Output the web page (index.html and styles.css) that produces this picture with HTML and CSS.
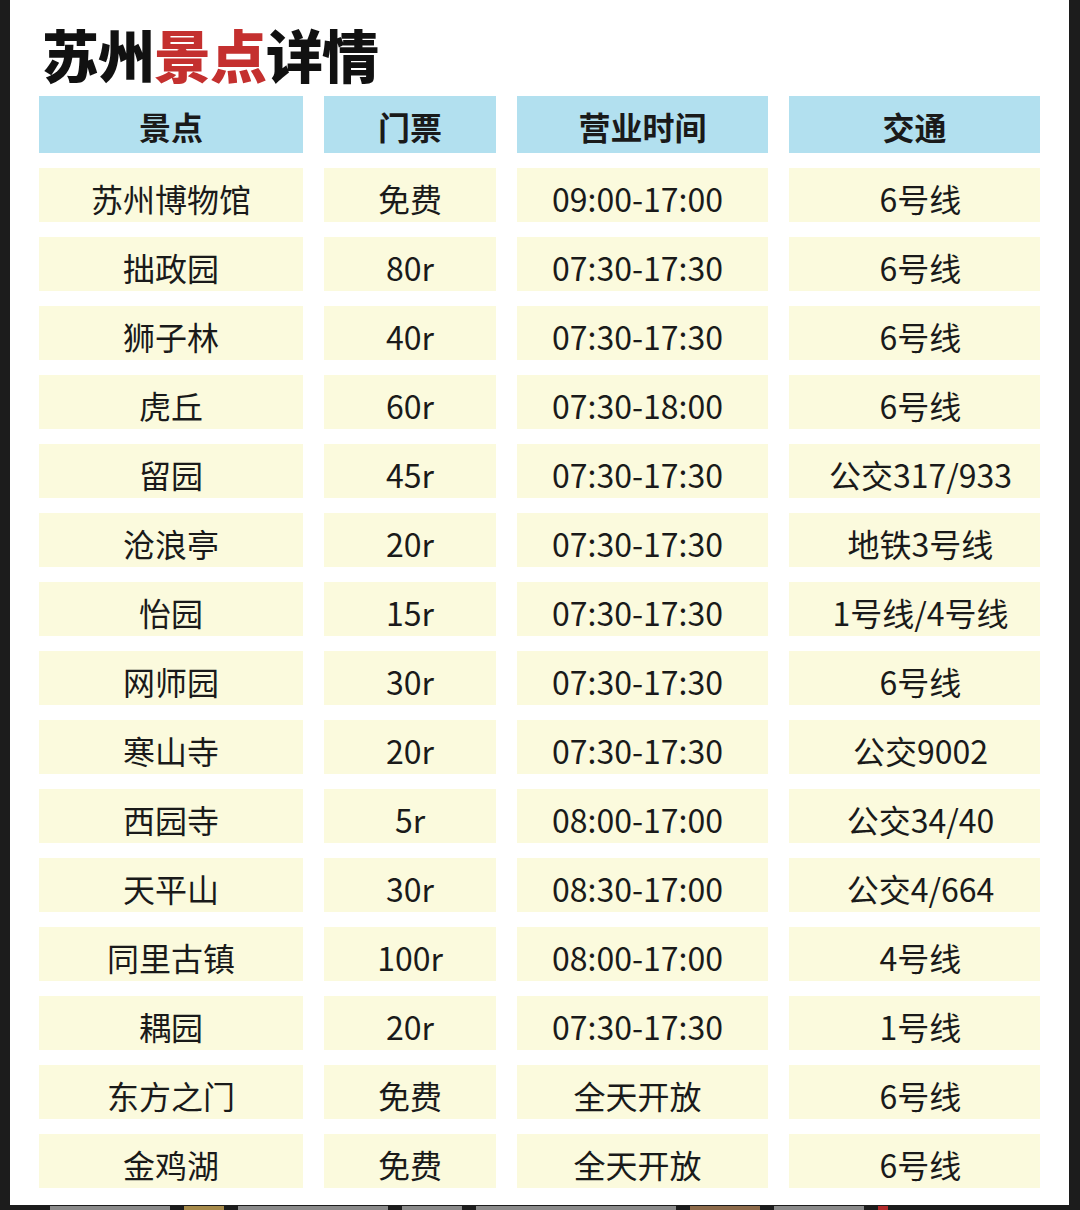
FILE: index.html
```html
<!DOCTYPE html>
<html lang="zh-CN">
<head>
<meta charset="utf-8">
<link rel="stylesheet" href="styles.css">
</head>
<body>
<div class="page">
  <div class="card">
    <h1 class="title">苏州<span class="hl">景点</span>详情</h1>
    <div class="table">
      <div class="th">景点</div><div class="th">门票</div><div class="th">营业时间</div><div class="th">交通</div>
      <div class="td">苏州博物馆</div><div class="td">免费</div><div class="td c3">09:00-17:00</div><div class="td c4">6号线</div>
      <div class="td">拙政园</div><div class="td">80r</div><div class="td c3">07:30-17:30</div><div class="td c4">6号线</div>
      <div class="td">狮子林</div><div class="td">40r</div><div class="td c3">07:30-17:30</div><div class="td c4">6号线</div>
      <div class="td">虎丘</div><div class="td">60r</div><div class="td c3">07:30-18:00</div><div class="td c4">6号线</div>
      <div class="td">留园</div><div class="td">45r</div><div class="td c3">07:30-17:30</div><div class="td c4">公交317/933</div>
      <div class="td">沧浪亭</div><div class="td">20r</div><div class="td c3">07:30-17:30</div><div class="td c4">地铁3号线</div>
      <div class="td">怡园</div><div class="td">15r</div><div class="td c3">07:30-17:30</div><div class="td c4">1号线/4号线</div>
      <div class="td">网师园</div><div class="td">30r</div><div class="td c3">07:30-17:30</div><div class="td c4">6号线</div>
      <div class="td">寒山寺</div><div class="td">20r</div><div class="td c3">07:30-17:30</div><div class="td c4">公交9002</div>
      <div class="td">西园寺</div><div class="td">5r</div><div class="td c3">08:00-17:00</div><div class="td c4">公交34/40</div>
      <div class="td">天平山</div><div class="td">30r</div><div class="td c3">08:30-17:00</div><div class="td c4">公交4/664</div>
      <div class="td">同里古镇</div><div class="td">100r</div><div class="td c3">08:00-17:00</div><div class="td c4">4号线</div>
      <div class="td">耦园</div><div class="td">20r</div><div class="td c3">07:30-17:30</div><div class="td c4">1号线</div>
      <div class="td">东方之门</div><div class="td">免费</div><div class="td c3">全天开放</div><div class="td c4">6号线</div>
      <div class="td">金鸡湖</div><div class="td">免费</div><div class="td c3">全天开放</div><div class="td c4">6号线</div>
    </div>
  </div>
  <div class="below">
    <span class="frag w120"></span><span class="frag w40 gold"></span><span class="frag w150"></span><span class="frag w60"></span><span class="frag w200"></span><span class="frag w70 brown"></span><span class="frag w90"></span><span class="frag w10 red"></span>
  </div>
</div>
</body>
</html>
```

FILE: styles.css
```css
html, body {
  margin: 0;
  padding: 0;
  background: #1c1c1c;
  font-family: "Noto Sans CJK SC", "Noto Sans", sans-serif;
}
.page {
  width: 1080px;
  height: 1210px;
  overflow: hidden;
  background: #1c1c1c;
}
.card {
  margin-left: 10px;
  width: 1059px;
  height: 1205px;
  background: #ffffff;
  box-sizing: border-box;
  padding: 0 0 0 29px;
}
.title {
  margin: 0;
  padding: 25px 0 0 3px;
  height: 76px;
  box-sizing: border-box;
  font-size: 57px;
  line-height: 56px;
  font-weight: 900;
  color: #111111;
  letter-spacing: -1px;
}
.hl {
  color: #c4302f;
}
.table {
  display: grid;
  grid-template-columns: 264px 172px 251px 251px;
  column-gap: 21px;
  row-gap: 15px;
  grid-auto-rows: 54px;
  grid-template-rows: 57px;
  margin-top: 20px;
}
.th, .td {
  display: flex;
  align-items: center;
  justify-content: center;
  font-size: 32px;
  color: #1a1a1a;
  box-sizing: border-box;
}
.th {
  background: #b2e0ef;
  font-weight: 700;
  padding-top: 3px;
}
.td {
  background: #fbfadd;
  font-weight: 400;
  padding-top: 5px;
}
.td.c3 {
  padding-right: 10px;
}
.td.c4 {
  padding-left: 12px;
}
.below {
  height: 5px;
  overflow: hidden;
  padding-left: 50px;
  display: flex;
  align-items: flex-start;
  gap: 14px;
}
.frag {
  display: block;
  height: 4px;
  margin-top: 1px;
  background: #8a8a8a;
}
.w10 { width: 10px; }
.w40 { width: 40px; }
.w60 { width: 60px; }
.w70 { width: 70px; }
.w90 { width: 90px; }
.w120 { width: 120px; }
.w150 { width: 150px; }
.w200 { width: 200px; }
.gold { background: #a68a4a; }
.brown { background: #8c6a4a; }
.red { background: #b02a2a; }
```
